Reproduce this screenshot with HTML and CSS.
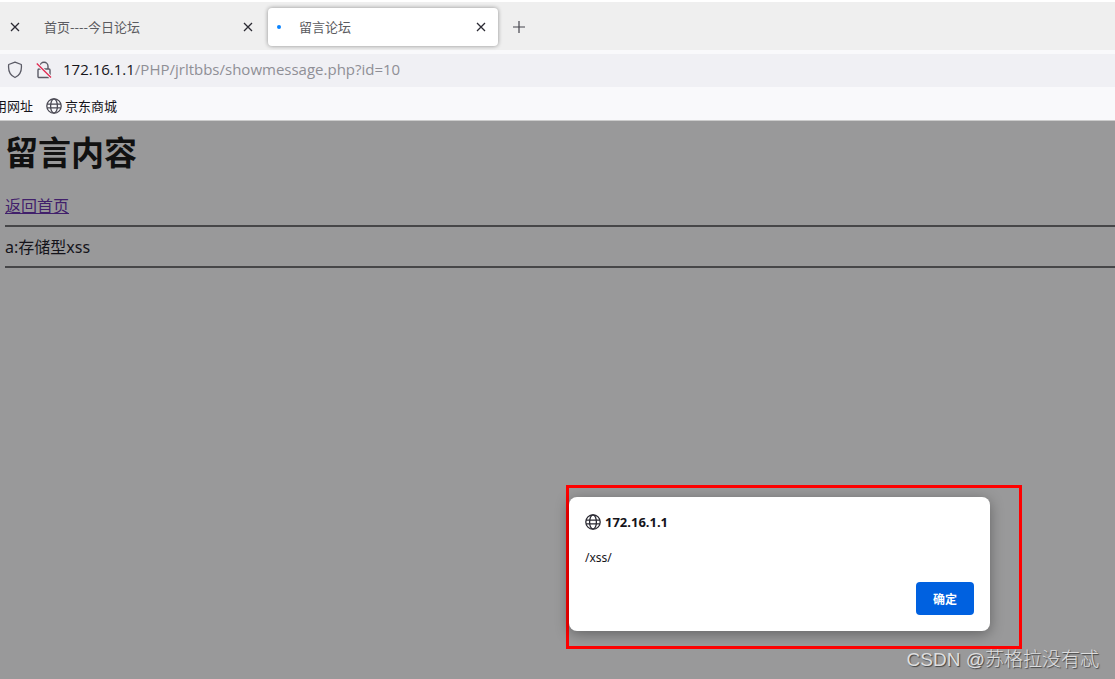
FILE: index.html
```html
<!DOCTYPE html>
<html lang="zh-CN">
<head>
<meta charset="utf-8">
<title>留言论坛</title>
<link rel="stylesheet" href="styles.css">
</head>
<body>
<svg class="defs" width="0" height="0" aria-hidden="true">
  <symbol id="globe" viewBox="0 0 16 16"><g fill="none" stroke="currentColor" stroke-width="1.3"><circle cx="8" cy="8" r="7.2"/><ellipse cx="8" cy="8" rx="3.4" ry="7.2"/><path d="M1.2 6.2h13.6M1.2 9.9h13.6"/></g></symbol>
  <symbol id="close" viewBox="0 0 10 10"><path d="M1 1l8 8M9 1l-8 8" fill="none" stroke="currentColor" stroke-width="1.3"/></symbol>
</svg>
<header class="browser">
  <nav class="tabs">
    <div class="tab tab-cut"><button class="close" aria-label="关闭"><svg><use href="#close"/></svg></button></div>
    <div class="tab"><span class="tab-title">首页----今日论坛</span><button class="close" aria-label="关闭"><svg><use href="#close"/></svg></button></div>
    <div class="tab tab-active"><span class="dot"></span><span class="tab-title">留言论坛</span><button class="close" aria-label="关闭"><svg><use href="#close"/></svg></button></div>
    <button class="new-tab" aria-label="新建标签页"><svg viewBox="0 0 14 14"><path d="M7 1v12M1 7h12" fill="none" stroke="currentColor" stroke-width="1.2"/></svg></button>
  </nav>
  <div class="address">
    <svg class="shield" viewBox="0 0 16 18"><path d="M8 1.2L14.3 3.5C15 9.5 13.2 14.2 8 16.5C2.8 14.2 1 9.5 1.7 3.5Z" fill="none" stroke="currentColor" stroke-width="1.3" stroke-linejoin="round"/></svg>
    <svg class="lock" viewBox="0 0 16 18"><path d="M4 8V5.200a4 4 0 0 1 8 0V8M3 8h10a1 1 0 0 1 1 1v6.500a1 1 0 0 1-1 1H3a1 1 0 0 1-1-1V9a1 1 0 0 1 1-1z" fill="none" stroke="currentColor" stroke-width="1.4"/><path d="M.8 2.500L15 16.500" stroke="#f0f0f4" stroke-width="3.200"/><path d="M.8 2.500L15 16.500" stroke="#e22850" stroke-width="1.300"/></svg>
    <span class="url"><b>172.16.1.1</b>/PHP/jrltbbs/showmessage.php?id=10</span>
  </div>
  <div class="bookmarks"><span>用网址</span><span class="bookmark"><svg class="globe"><use href="#globe"/></svg>京东商城</span></div>
</header>
<main class="page">
  <h1>留言内容</h1>
  <a class="back" href="#">返回首页</a>
  <hr>
  <p>a:存储型xss</p>
  <hr>
  <div class="highlight">
    <section class="dialog" role="dialog" aria-labelledby="origin">
      <h2 id="origin"><svg class="globe"><use href="#globe"/></svg>172.16.1.1</h2>
      <p class="message">/xss/</p>
      <button class="confirm">确定</button>
    </section>
  </div>
  <div class="watermark">CSDN @苏格拉没有忒</div>
</main>
</body>
</html>
```
FILE: styles.css
```css
* { box-sizing: border-box; }
body {
  margin: 0;
  min-height: 100vh;
  display: flex;
  flex-direction: column;
  overflow: hidden;
  font-family: "Noto Sans", "Noto Sans CJK SC", sans-serif;
  color: #15141a;
}
button { border: 0; padding: 0; background: none; color: inherit; font: inherit; }
.defs { position: absolute; }
.browser { background: #f9f9fb; border-top: 2px solid #fff; border-bottom: 1px solid #ccc; }
.tabs {
  display: flex;
  align-items: center;
  height: 48px;
  padding-top: 2px;
  background: #efefef;
}
.tab {
  display: flex;
  align-items: center;
  width: 232px;
  height: 38px;
  padding: 0 15px 0 8px;
  font-family: "Noto Sans CJK SC", sans-serif;
  font-size: 13px;
  line-height: 18px;
  color: #5b5b60;
}
.tab-cut { width: 36px; padding: 0 16px 0 10px; }
.tab-active {
  position: relative;
  width: 230px;
  padding: 0 12px 0 31px;
  background: #fff;
  border-radius: 4px;
  box-shadow: 0 0 4px rgba(0, 0, 0, .4);
}
.tab-title { flex: 1; }
.dot {
  position: absolute;
  left: 9px;
  width: 4px;
  height: 4px;
  border-radius: 50%;
  background: #0a84ff;
}
.close { display: flex; width: 10px; height: 10px; color: #2b2a33; }
.close svg { width: 10px; height: 10px; }
.new-tab { display: flex; margin-left: 14px; color: #45444c; }
.new-tab svg { width: 14px; height: 14px; }
.address {
  display: flex;
  align-items: center;
  height: 33px;
  margin-top: 4px;
  padding: 0 0 1px 7px;
  background: #f0f0f4;
  color: #5b5b66;
}
.shield { width: 16px; height: 18px; }
.lock { width: 16px; height: 18px; margin-left: 13px; }
.url {
  margin-left: 11px;
  font-family: "Open Sans", "Noto Sans", sans-serif;
  font-size: 15px;
  line-height: 20px;
  padding-bottom: 2px;
  color: #8f8f96;
}
.url b { font-weight: 400; color: #15141a; }
.bookmarks {
  display: flex;
  align-items: center;
  gap: 13px;
  height: 33px;
  padding-top: 4px;
  margin-left: -6px;
  font-family: "Noto Sans CJK SC", sans-serif;
  font-size: 13px;
}
.bookmark { display: flex; align-items: center; gap: 3px; }
.globe { width: 16px; height: 16px; color: #4b4a54; }
.page {
  position: relative;
  flex: 1;
  padding: 8px 0 0 5px;
  background: #99999a;
  font-size: 16px;
}
h1 {
  margin: 0 0 17px;
  font-size: 33px;
  line-height: 48px;
  color: #111;
}
.back { display: block; width: max-content; line-height: 24px; color: #41206b; }
hr { height: 2px; margin: 7px 0 8px; border: 0; background: #464648; }
.page p { margin: 0; line-height: 24px; }
.highlight {
  position: absolute;
  right: 93px;
  bottom: 30px;
  width: 456px;
  padding: 9px 29px 15px 0;
  border: 3px solid #f00;
}
.dialog {
  display: flex;
  flex-direction: column;
  padding: 15px 16px 16px;
  border-radius: 8px;
  background: #fff;
  box-shadow: 0 3px 14px rgba(0, 0, 0, .35);
}
h2 {
  display: flex;
  align-items: center;
  gap: 4px;
  margin: 0;
  font-size: 13px;
  line-height: 20px;
}
.dialog .globe { color: #2b2a33; }
.page .message { margin: 16px 0 14px; font-size: 12px; line-height: 20px; }
.confirm {
  align-self: flex-end;
  width: 58px;
  height: 33px;
  border-radius: 4px;
  background: #0061e0;
  color: #fff;
  font-size: 12px;
  font-weight: 700;
}
.watermark {
  position: absolute;
  right: 16px;
  bottom: 6px;
  font-family: "Liberation Sans", "Noto Sans CJK SC", sans-serif;
  font-size: 19px;
  font-weight: 300;
  line-height: 26px;
  color: #dededf;
  text-shadow: 1px 1px 1px #444;
}
```
